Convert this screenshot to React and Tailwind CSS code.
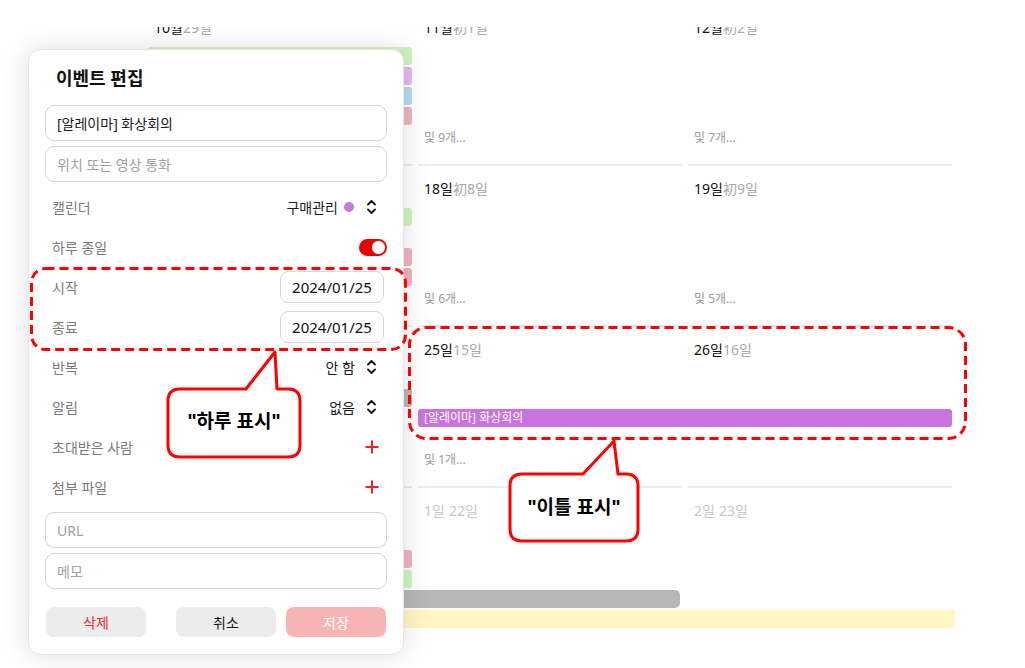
import React from "react";

const weeks = [
  {
    days: [
      { main: "10월", sub: "29일" },
      { main: "11월", sub: "初1일" },
      { main: "12월", sub: "初2일" },
    ],
    more: ["및 8개...", "및 9개...", "및 7개..."],
    bars: [
      { col: "col-start-1", span: "col-span-1", lane: "row-start-2", color: "bg-[#cdf5bd]" },
      { col: "col-start-1", span: "col-span-1", lane: "row-start-3", color: "bg-[#e6b9f2]" },
      { col: "col-start-1", span: "col-span-1", lane: "row-start-4", color: "bg-[#b5dcef]" },
      { col: "col-start-1", span: "col-span-1", lane: "row-start-5", color: "bg-[#efb5c0]" },
    ],
  },
  {
    days: [
      { main: "17일", sub: "初7일" },
      { main: "18일", sub: "初8일" },
      { main: "19일", sub: "初9일" },
    ],
    more: ["및 4개...", "및 6개...", "및 5개..."],
    bars: [
      { col: "col-start-1", span: "col-span-1", lane: "row-start-2", color: "bg-[#cdf5bd]" },
      { col: "col-start-1", span: "col-span-1", lane: "row-start-4", color: "bg-[#efb5c0]" },
      { col: "col-start-1", span: "col-span-1", lane: "row-start-5", color: "bg-[#efb5c0]" },
    ],
  },
  {
    days: [
      { main: "24일", sub: "14일" },
      { main: "25일", sub: "15일" },
      { main: "26일", sub: "16일" },
    ],
    more: ["및 2개...", "및 1개...", null],
    bars: [
      { col: "col-start-1", span: "col-span-1", lane: "row-start-3", color: "bg-[#b9b9b9]" },
      {
        col: "col-start-2",
        span: "col-span-2",
        lane: "row-start-4",
        color: "bg-[#c973e0]",
        label: "[알레이마] 화상회의",
      },
    ],
  },
  {
    days: [
      { main: "31일", sub: "21일", faded: true },
      { main: "1일", sub: "22일", faded: true },
      { main: "2일", sub: "23일", faded: true },
    ],
    more: [null, null, null],
    last: true,
    bars: [
      { col: "col-start-1", span: "col-span-1", lane: "row-start-3", color: "bg-[#efb5c0]" },
      { col: "col-start-1", span: "col-span-1", lane: "row-start-4", color: "bg-[#cdf5bd]" },
      { col: "col-start-1", span: "col-span-2", lane: "row-start-5", color: "bg-[#b7b7b7] rounded-r-[5px] mr-[2px]" },
      { col: "col-start-1", span: "col-span-3", lane: "row-start-6", color: "bg-[#fff6c2] -mr-[3px]" },
    ],
  },
];

const colStarts = ["col-start-1", "col-start-2", "col-start-3"];

function WeekRow({ week }) {
  return (
    <div className="grid h-[161px] grid-cols-[264px_264px_264px] grid-rows-[40px_18px_18px_18px_18px_18px_1fr] gap-x-[6px] gap-y-[2px]">
      {week.days.map((d, i) => (
        <div
          key={"d" + i}
          className={`${colStarts[i]} row-start-1 flex items-end pb-[8px] pl-[6px] text-[14px] leading-[18px]`}
        >
          <span className={d.faded ? "text-[#c8c8c8]" : "text-[#111]"}>{d.main}</span>
          <span className={d.faded ? "ml-[4px] text-[#c8c8c8]" : "text-[#a9a9a9]"}>{d.sub}</span>
        </div>
      ))}
      {week.bars.map((b, i) => (
        <div
          key={"b" + i}
          className={`${b.col} ${b.span} ${b.lane} flex items-center rounded-[3px] pl-[6px] text-[12px] text-white ${b.color}`}
        >
          {b.label}
        </div>
      ))}
      {week.more.map((m, i) =>
        m ? (
          <div
            key={"m" + i}
            className={`${colStarts[i]} row-start-6 pl-[6px] pt-[3px] text-[12px] leading-[16px] text-[#9a9a9a]`}
          >
            {m}
          </div>
        ) : null
      )}
      {!week.last &&
        [0, 1, 2].map((i) => (
          <div key={"l" + i} className={`${colStarts[i]} row-start-7 self-end border-b-2 border-[#ececec]`} />
        ))}
    </div>
  );
}

function UpDown() {
  return (
    <svg width="11" height="16" viewBox="0 0 11 16" fill="none" stroke="#111" strokeWidth="1.8" strokeLinecap="round" strokeLinejoin="round">
      <path d="M2 5.5 L5.5 2 L9 5.5" />
      <path d="M2 10.5 L5.5 14 L9 10.5" />
    </svg>
  );
}

function RedPlus() {
  return (
    <svg width="14" height="14" viewBox="0 0 14 14" stroke="#ee2222" strokeWidth="2" strokeLinecap="butt">
      <path d="M7 0.5 V13.5 M0.5 7 H13.5" />
    </svg>
  );
}

function Row({ label, children, pr = "pr-[10px]" }) {
  return (
    <div className={`flex h-10 items-center justify-between pl-[7px] ${pr}`}>
      <span className="text-[14px] text-[#7a7a7a]">{label}</span>
      <div className="flex items-center">{children}</div>
    </div>
  );
}

function Field({ children, placeholder }) {
  return (
    <div className="flex h-[36px] items-center rounded-[9px] border border-[#d6d6d6] px-[11px] text-[14px]">
      {children ? <span className="text-[#1a1a1a]">{children}</span> : <span className="text-[#a0a0a0]">{placeholder}</span>}
    </div>
  );
}

function DateBox({ value }) {
  return (
    <div className="flex h-[32px] w-[104px] items-center justify-center rounded-[8px] border border-[#d8d8d8] text-[15px] text-[#111]">
      {value}
    </div>
  );
}

function EditDialog() {
  return (
    <div className="absolute left-[28px] top-[49px] flex h-[606px] w-[376px] flex-col rounded-[12px] border border-[#e6e6e6] bg-white px-[16px] pt-[16px] shadow-[0_0_28px_rgba(0,0,0,0.13)]">
      <div className="pl-[11px] text-[18px] font-bold leading-[24px] text-[#111]">이벤트 편집</div>
      <div className="mt-[15px] flex flex-col gap-[5px]">
        <Field>[알레이마] 화상회의</Field>
        <Field placeholder="위치 또는 영상 통화" />
      </div>
      <div className="mt-[5px] flex flex-col">
        <Row label="캘린더">
          <span className="text-[14px] text-[#1a1a1a]">구매관리</span>
          <span className="ml-[6px] h-[10px] w-[10px] rounded-full bg-[#c977e0]" />
          <span className="ml-[12px]">
            <UpDown />
          </span>
        </Row>
        <Row label="하루 종일" pr="pr-0">
          <div className="flex h-[17px] w-[28px] items-center justify-end rounded-full bg-[#e60000] pr-[1px]">
            <div className="h-[15px] w-[15px] rounded-full border border-[#e60000] bg-white" />
          </div>
        </Row>
        <Row label="시작" pr="pr-[3px]">
          <DateBox value="2024/01/25" />
        </Row>
        <Row label="종료" pr="pr-[3px]">
          <DateBox value="2024/01/25" />
        </Row>
        <Row label="반복">
          <span className="text-[14px] text-[#1a1a1a]">안 함</span>
          <span className="ml-[11px]">
            <UpDown />
          </span>
        </Row>
        <Row label="알림">
          <span className="text-[14px] text-[#1a1a1a]">없음</span>
          <span className="ml-[11px]">
            <UpDown />
          </span>
        </Row>
        <Row label="초대받은 사람" pr="pr-[8px]">
          <RedPlus />
        </Row>
        <Row label="첨부 파일" pr="pr-[8px]">
          <RedPlus />
        </Row>
      </div>
      <div className="mt-[5px] flex flex-col gap-[5px]">
        <Field placeholder="URL" />
        <Field placeholder="메모" />
      </div>
      <div className="mt-[18px] flex items-center px-px">
        <button className="h-[30px] w-[100px] rounded-[8px] bg-[#ececec] text-[14px] text-[#f02b2b]">삭제</button>
        <button className="ml-auto h-[30px] w-[100px] rounded-[8px] bg-[#ececec] text-[14px] text-[#1a1a1a]">취소</button>
        <button className="ml-[10px] h-[30px] w-[100px] rounded-[8px] bg-[#f6b4b2] text-[14px] text-white">저장</button>
      </div>
    </div>
  );
}

function Callouts() {
  return (
    <>
      <svg className="pointer-events-none absolute left-0 top-0" width="1025" height="668" fill="none">
        <rect x="31.5" y="268.5" width="374" height="81" rx="14" stroke="#ff0000" strokeWidth="3" strokeDasharray="9 5" />
        <rect x="409.5" y="327.5" width="556" height="111" rx="17" stroke="#ff0000" strokeWidth="3" strokeDasharray="9 5" />
        <path
          d="M180 389 H246 L275 352 L277 389 H288 Q300 389 300 401 V445 Q300 457 288 457 H180 Q168 457 168 445 V401 Q168 389 180 389 Z"
          fill="#fff"
          stroke="#ff0000"
          strokeWidth="3"
          strokeLinejoin="round"
        />
        <path
          d="M522 474 H583 L614 441 L618 474 H626 Q638 474 638 486 V529 Q638 541 626 541 H522 Q510 541 510 529 V486 Q510 474 522 474 Z"
          fill="#fff"
          stroke="#ff0000"
          strokeWidth="3"
          strokeLinejoin="round"
        />
      </svg>
      <div className="absolute left-[168px] top-[389px] flex h-[64px] w-[132px] items-center justify-center text-[19px] font-bold text-black">
        "하루 표시"
      </div>
      <div className="absolute left-[510px] top-[474px] flex h-[66px] w-[128px] items-center justify-center text-[19px] font-bold text-black">
        "이틀 표시"
      </div>
    </>
  );
}

export default function App() {
  return (
    <div className="relative h-[668px] w-[1025px] overflow-hidden bg-white font-['Noto_Sans','Noto_Sans_CJK_KR',sans-serif]">
      <div className="pl-[148px] pt-[27px]">
        <div className="h-[641px] overflow-hidden">
          <div className="-mt-[22px] flex flex-col">
            {weeks.map((w, i) => (
              <WeekRow key={i} week={w} />
            ))}
          </div>
        </div>
      </div>
      <EditDialog />
      <Callouts />
    </div>
  );
}
